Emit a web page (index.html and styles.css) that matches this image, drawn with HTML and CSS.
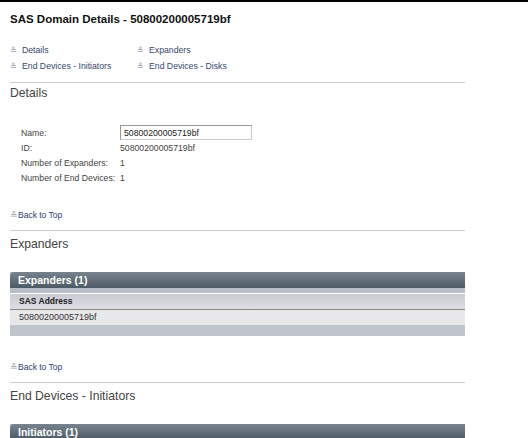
FILE: index.html
```html
<!DOCTYPE html>
<html lang="en">
<head>
  <meta charset="UTF-8" />
  <title>SAS Domain Details</title>
  <link rel="stylesheet" href="styles.css">
</head>
<body>
  <div class="page">
    <h1 class="page-title">SAS Domain Details - 50800200005719bf</h1>

    <!-- jump links -->
    <div class="jump-links">
      <a href="#details"><span class="jump-icon">&#8794;</span>Details</a>
      <a href="#expanders"><span class="jump-icon">&#8794;</span>Expanders</a>
      <a href="#initiators"><span class="jump-icon">&#8794;</span>End Devices - Initiators</a>
      <a href="#disks"><span class="jump-icon">&#8794;</span>End Devices - Disks</a>
    </div>

    <div class="section" id="details">
      <h2>Details</h2>
      <div class="props">
        <div class="prop-label">Name:</div>
        <div class="prop-value"><input class="name-input" type="text" value="50800200005719bf"></div>
        <div class="prop-label">ID:</div>
        <div class="prop-value">50800200005719bf</div>
        <div class="prop-label">Number of Expanders:</div>
        <div class="prop-value">1</div>
        <div class="prop-label">Number of End Devices:</div>
        <div class="prop-value">1</div>
      </div>
      <a class="back-top" href="#"><span class="back-icon">&#8793;</span>Back to Top</a>
    </div>

    <div class="section" id="expanders">
      <h2>Expanders</h2>
      <div class="data-table">
        <div class="table-title">Expanders (1)</div>
        <div class="table-gap"></div>
        <div class="table-head">SAS Address</div>
        <div class="table-row">50800200005719bf</div>
        <div class="table-foot"></div>
      </div>
      <a class="back-top" href="#"><span class="back-icon">&#8793;</span>Back to Top</a>
    </div>

    <div class="section" id="initiators">
      <h2>End Devices - Initiators</h2>
      <div class="data-table">
        <div class="table-title">Initiators (1)</div>
        <div class="table-gap"></div>
        <div class="table-head">SAS Address</div>
        <div class="table-row">50800200005719bf</div>
        <div class="table-foot"></div>
      </div>
    </div>
  </div>
</body>
</html>
```

FILE: styles.css
```css
body {
  margin: 0;
  border-top: 2px solid #000;
  background: #fff;
  font-family: "Liberation Sans", Arial, sans-serif;
  color: #333;
}
.page {
  width: 455px;
  margin-left: 10px;
}
.page-title {
  margin: 0;
  padding-top: 10px;
  font-size: 11.5px;
  font-weight: bold;
  color: #111;
  line-height: 14px;
}
/* jump links at the top */
.jump-links {
  display: grid;
  grid-template-columns: 127px auto;
  row-gap: 1px;
  margin-top: 17px;
  padding-bottom: 8px;
  border-bottom: 1px solid #ccc;
}
.jump-links a {
  font-size: 8.7px;
  line-height: 14px;
  color: #34486b;
  text-decoration: none;
}
.jump-icon {
  display: inline-block;
  width: 12px;
  color: #9aa3b0;
  font-size: 8px;
}
.section + .section {
  border-top: 1px solid #ccc;
}
.section h2 {
  margin: 0;
  padding-top: 6px;
  font-size: 12.2px;
  font-weight: normal;
  color: #444;
  line-height: 14px;
}
#details h2 {
  padding-top: 3px;
}
/* name / id properties */
.props {
  display: grid;
  grid-template-columns: 99px auto;
  grid-auto-rows: 15px;
  margin-top: 25px;
  padding-left: 11px;
  font-size: 8.7px;
  color: #444;
  align-items: center;
}
.name-input {
  display: block;
  width: 132px;
  height: 15px;
  box-sizing: border-box;
  margin: 0;
  padding: 0 3px;
  border: 1px solid #999;
  border-right-color: #ccc;
  border-bottom-color: #ccc;
  font-family: "Liberation Sans", Arial, sans-serif;
  font-size: 8.7px;
  color: #222;
}
.back-top {
  display: block;
  margin-top: 24px;
  margin-bottom: 9px;
  font-size: 8.5px;
  line-height: 12px;
  color: #2c3d6e;
  text-decoration: none;
}
.data-table + .back-top {
  margin-top: 25px;
}
.back-icon {
  display: inline-block;
  width: 8px;
  color: #9aa3b0;
}
/* dark header tables */
.data-table {
  margin-top: 21px;
  background: #bfc5cb;
}
.table-title {
  height: 16px;
  line-height: 16px;
  padding-left: 8px;
  border-top-left-radius: 4px;
  background: linear-gradient(#78838e, #4c5a66);
  color: #fff;
  font-size: 10.5px;
  font-weight: bold;
}
.table-gap {
  height: 5px;
  background: #b8bfc6;
  border-bottom: 1px solid #fff;
}
.table-head {
  height: 15px;
  line-height: 15px;
  padding-left: 9px;
  background: linear-gradient(#c9ccd2, #dcdde2);
  border-bottom: 1px solid #888;
  font-size: 8.5px;
  font-weight: bold;
  color: #222;
}
.table-row {
  height: 15px;
  line-height: 15px;
  padding-left: 9px;
  background: #e8e8ea;
  font-size: 9px;
  color: #333;
}
.table-foot {
  height: 11px;
  background: #bfc5ca;
}
```
